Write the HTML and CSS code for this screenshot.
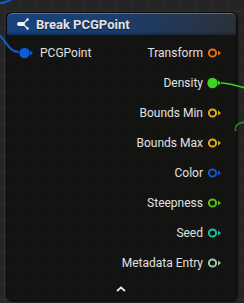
FILE: index.html
```html
<!DOCTYPE html>
<html lang="en">
<head>
  <meta charset="UTF-8">
  <meta name="viewport" content="width=device-width, initial-scale=1.0">
  <title>Break PCGPoint</title>
  <link rel="stylesheet" href="styles.css">
</head>
<body>
  <div class="graph">
    <div class="node">
      <div class="node-header">
        <svg class="break-icon" width="14" height="14" viewBox="0 0 14 14">
          <rect x="1" y="5" width="8" height="4" rx="2" fill="#f2f2f2"/>
          <path d="M8 6 L11 3 M8 8 L11 11" stroke="#f2f2f2" stroke-width="1.2" fill="none"/>
          <circle cx="11.5" cy="2.5" r="1.3" fill="#f2f2f2"/>
          <circle cx="11.5" cy="11.5" r="1.3" fill="#f2f2f2"/>
        </svg>
        <span class="node-title">Break PCGPoint</span>
      </div>
      <div class="node-body">
        <div class="pin-row">
          <div class="pin pin-in">
            <svg class="pin-icon" width="15" height="12" viewBox="0 0 15 12">
              <circle cx="5.5" cy="6" r="5.2" fill="#0f5bd6"/>
              <polygon points="11,3.5 14,6 11,8.5" fill="#0f5bd6"/>
            </svg>
            <span>PCGPoint</span>
          </div>
          <div class="pin pin-out">
            <span>Transform</span>
            <svg class="pin-icon" width="15" height="12" viewBox="0 0 15 12">
              <circle cx="5.5" cy="6" r="3.6" fill="none" stroke="#e8700a" stroke-width="2"/>
              <polygon points="11,3.5 14,6 11,8.5" fill="#e8700a"/>
            </svg>
          </div>
        </div>
        <div class="pin-row right">
          <div class="pin pin-out">
            <span>Density</span>
            <svg class="pin-icon" width="15" height="12" viewBox="0 0 15 12">
              <circle cx="5.5" cy="6" r="5.2" fill="#3bd41e"/>
              <polygon points="11,3.5 14,6 11,8.5" fill="#3bd41e"/>
            </svg>
          </div>
        </div>
        <div class="pin-row right">
          <div class="pin pin-out">
            <span>Bounds Min</span>
            <svg class="pin-icon" width="15" height="12" viewBox="0 0 15 12">
              <circle cx="5.5" cy="6" r="3.6" fill="none" stroke="#e0aa1c" stroke-width="2"/>
              <polygon points="11,3.5 14,6 11,8.5" fill="#e0aa1c"/>
            </svg>
          </div>
        </div>
        <div class="pin-row right">
          <div class="pin pin-out">
            <span>Bounds Max</span>
            <svg class="pin-icon" width="15" height="12" viewBox="0 0 15 12">
              <circle cx="5.5" cy="6" r="3.6" fill="none" stroke="#e0aa1c" stroke-width="2"/>
              <polygon points="11,3.5 14,6 11,8.5" fill="#e0aa1c"/>
            </svg>
          </div>
        </div>
        <div class="pin-row right">
          <div class="pin pin-out">
            <span>Color</span>
            <svg class="pin-icon" width="15" height="12" viewBox="0 0 15 12">
              <circle cx="5.5" cy="6" r="3.6" fill="none" stroke="#1259d2" stroke-width="2"/>
              <polygon points="11,3.5 14,6 11,8.5" fill="#1259d2"/>
            </svg>
          </div>
        </div>
        <div class="pin-row right">
          <div class="pin pin-out">
            <span>Steepness</span>
            <svg class="pin-icon" width="15" height="12" viewBox="0 0 15 12">
              <circle cx="5.5" cy="6" r="3.6" fill="none" stroke="#5cbf18" stroke-width="2"/>
              <polygon points="11,3.5 14,6 11,8.5" fill="#5cbf18"/>
            </svg>
          </div>
        </div>
        <div class="pin-row right">
          <div class="pin pin-out">
            <span>Seed</span>
            <svg class="pin-icon" width="15" height="12" viewBox="0 0 15 12">
              <circle cx="5.5" cy="6" r="3.6" fill="none" stroke="#1fbf9e" stroke-width="2"/>
              <polygon points="11,3.5 14,6 11,8.5" fill="#1fbf9e"/>
            </svg>
          </div>
        </div>
        <div class="pin-row right">
          <div class="pin pin-out">
            <span>Metadata Entry</span>
            <svg class="pin-icon" width="15" height="12" viewBox="0 0 15 12">
              <circle cx="5.5" cy="6" r="3.6" fill="none" stroke="#a3c8a6" stroke-width="2"/>
              <polygon points="11,3.5 14,6 11,8.5" fill="#a3c8a6"/>
            </svg>
          </div>
        </div>
        <div class="collapse">
          <svg width="10" height="6" viewBox="0 0 10 6">
            <path d="M1 5 L5 1.5 L9 5" stroke="#e6e6e6" stroke-width="1.8" fill="none"/>
          </svg>
        </div>
      </div>
    </div>

    <!-- wires drawn over the canvas -->
    <svg class="wires" width="244" height="303" viewBox="0 0 244 303">
      <path d="M0 3 C5 3 9 1 14 -2" stroke="#0f5bd6" stroke-width="2" fill="none"/>
      <path d="M-2 34 C5 38 8 52 19 52" stroke="#0f5bd6" stroke-width="2" fill="none"/>
      <path d="M221 83 C230 83 236 86 246 88" stroke="#3bd41e" stroke-width="1.6" fill="none"/>
      <path d="M246 122 C238 122 234 126 236 131" stroke="#3bb41e" stroke-width="1.6" fill="none" opacity="0.7"/>
    </svg>
  </div>
</body>
</html>
```

FILE: styles.css
```css
body {
  margin: 0;
  padding: 0;
  font-family: Roboto, "Liberation Sans", sans-serif;
  background-color: #252525;
  background-image:
    linear-gradient(to right, #2f2f2f 1px, transparent 1px),
    linear-gradient(to bottom, #2f2f2f 1px, transparent 1px);
  background-size: 16px 16px;
  background-position: 4px 11px;
  overflow: hidden;
}
.graph {
  position: relative;
  width: 244px;
  height: 303px;
  padding: 12px 0 0 6px;
  box-sizing: border-box;
}
.node {
  width: 231px;
  height: 289px;
  border-radius: 6px;
  border: 1px solid #0b0b0b;
  box-sizing: border-box;
  overflow: hidden;
  background-color: rgba(16, 18, 15, 0.86);
  box-shadow: 1px 1px 2px rgba(0, 0, 0, 0.6);
  display: flex;
  flex-direction: column;
}
.node-header {
  height: 22px;
  display: flex;
  align-items: center;
  padding-left: 9px;
  gap: 6px;
  background: linear-gradient(to right, #17437f 0%, #1a3e70 45%, #2b3139 100%);
  box-shadow: inset 0 1px 0 rgba(255, 255, 255, 0.28), inset 0 -2px 3px rgba(0, 0, 0, 0.25);
  border-radius: 5px 5px 0 0;
}
.break-icon {
  flex-shrink: 0;
}
.node-title {
  color: #e2e2e2;
  font-weight: bold;
  font-size: 13px;
  text-shadow: 0 1px 1px rgba(0, 0, 0, 0.6);
}
.node-body {
  flex: 1;
  display: flex;
  flex-direction: column;
  padding: 3px 14px 0 12px;
}
.pin-row {
  height: 30px;
  display: flex;
  align-items: center;
  justify-content: space-between;
}
.pin-row.right {
  justify-content: flex-end;
}
.pin {
  display: flex;
  align-items: center;
  color: #e0e0e0;
  font-size: 12px;
}
.pin-in {
  gap: 6px;
}
.pin-out {
  gap: 4px;
}
.pin-icon {
  flex-shrink: 0;
}
.collapse {
  display: flex;
  justify-content: center;
  padding-top: 8px;
}
.wires {
  position: absolute;
  left: 0;
  top: 0;
  pointer-events: none;
}
```
